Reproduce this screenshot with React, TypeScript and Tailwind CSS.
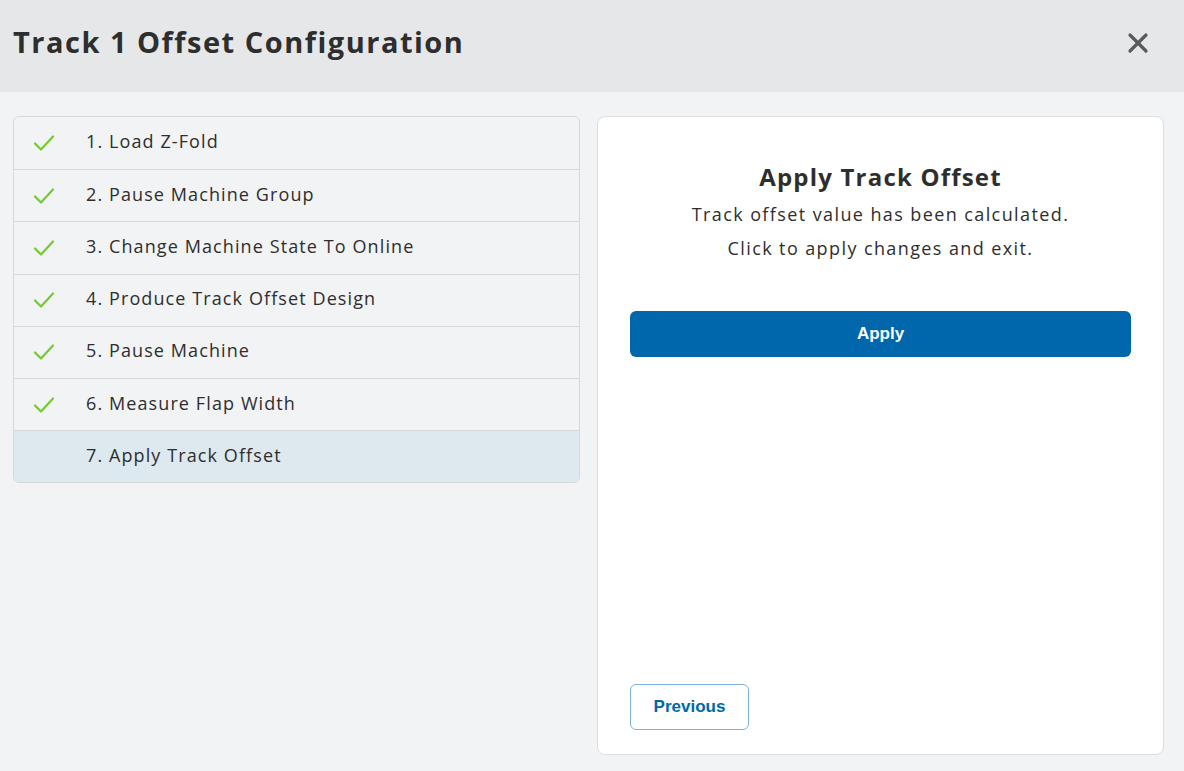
import { X } from 'lucide-react';

const steps = [
  '1. Load Z-Fold',
  '2. Pause Machine Group',
  '3. Change Machine State To Online',
  '4. Produce Track Offset Design',
  '5. Pause Machine',
  '6. Measure Flap Width',
  '7. Apply Track Offset',
];

const Check = () => (
  <svg width="22" height="18" viewBox="0 0 22 18" fill="none">
    <path d="M2 9.5 L8 15.5 L20 2.5" stroke="#72cc2e" strokeWidth="2.2" strokeLinecap="round" strokeLinejoin="round" />
  </svg>
);

export default function App() {
  const current = 6;

  return (
    <div className="w-[1184px] h-[771px] bg-[#f2f3f5] text-[#2e2e2e] flex flex-col" style={{ fontFamily: '"Open Sans", "Noto Sans", sans-serif' }}>
      {/* Header */}
      <div className="h-[92px] shrink-0 bg-[#e6e7e9] flex items-center justify-between pl-[13px] pr-[30px]">
        <h1 className="text-[29px] font-bold tracking-[1.5px] pb-[8px]">Track 1 Offset Configuration</h1>
        <button className="text-[#5a5a5a] pb-[6px]">
          <X size={32} strokeWidth={2.4} />
        </button>
      </div>

      {/* Body */}
      <div className="flex-1 flex gap-[17px] pl-[13px] pr-[20px] pt-[24px] pb-[16px]">
        <div className="w-[567px] self-start rounded-[6px] border border-[#d6d8db] overflow-hidden">
          {steps.map((step, i) => (
            <div
              key={i}
              className={`h-[52.2px] flex items-center ${i > 0 ? 'border-t border-[#d6d8db]' : ''} ${i === current ? 'bg-[#dee8ef]' : 'bg-[#f2f3f5]'}`}
            >
              <div className="w-[72px] pl-[19px] flex items-center">{i < current && <Check />}</div>
              <span className="text-[18px] font-medium tracking-[1.1px] pb-[3px]">{step}</span>
            </div>
          ))}
        </div>

        <div className="flex-1 bg-white rounded-[8px] border border-[#dcdee1] flex flex-col px-[32px] pt-[44px] pb-[24px]">
          <div className="text-center">
            <h2 className="text-[24px] font-bold tracking-[1.2px] leading-[32px]">Apply Track Offset</h2>
            <p className="text-[18px] tracking-[1.4px] mt-[9px] leading-[24px]">Track offset value has been calculated.</p>
            <p className="text-[18px] tracking-[1.4px] mt-[10px] leading-[24px]">Click to apply changes and exit.</p>
          </div>
          <button
            className="mt-[51px] h-[46px] w-full rounded-[6px] bg-[#0067ac] text-white text-[17px] font-bold"
            style={{ fontFamily: '"Liberation Sans", Arial, sans-serif' }}
          >
            Apply
          </button>
          <div className="flex-1" />
          <button
            className="self-start h-[46px] w-[119px] rounded-[6px] border border-[#7fb1d8] bg-white text-[#0067ac] text-[17px] font-bold"
            style={{ fontFamily: '"Liberation Sans", Arial, sans-serif' }}
          >
            Previous
          </button>
        </div>
      </div>
    </div>
  );
}
